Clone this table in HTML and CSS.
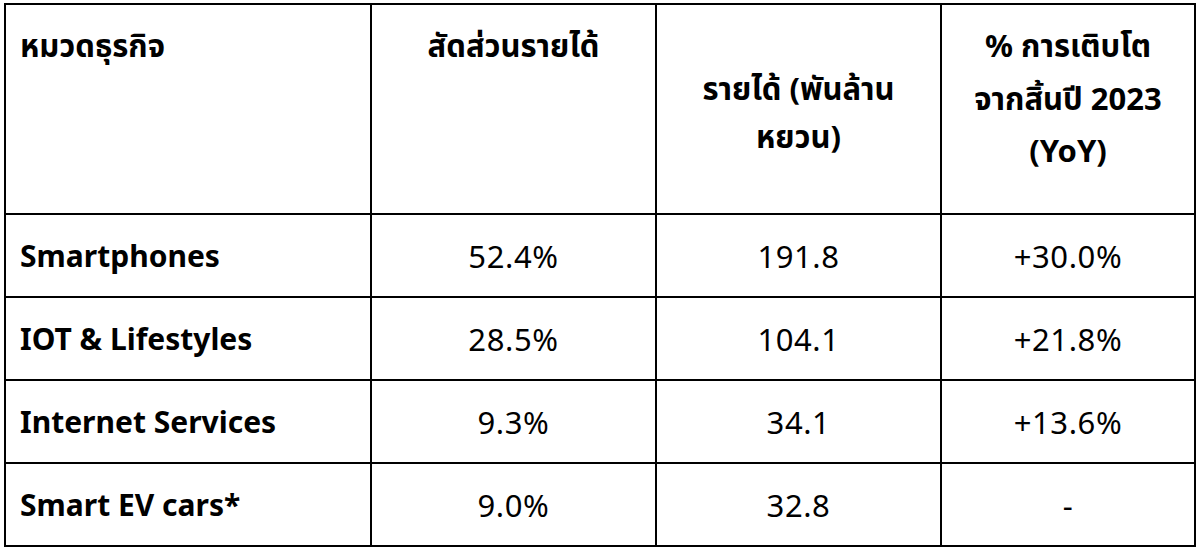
FILE: index.html
```html
<!DOCTYPE html>
<html lang="th">
<head>
<meta charset="utf-8">
<link rel="stylesheet" href="styles.css">
</head>
<body>
<table class="data">
  <colgroup>
    <col class="c1"><col class="c2"><col class="c3"><col class="c4">
  </colgroup>
  <thead>
    <tr class="head-row">
      <th class="h-left">หมวดธุรกิจ</th>
      <th class="h-top">สัดส่วนรายได้</th>
      <th class="h-mid">รายได้ (พันล้าน<br>หยวน)</th>
      <th class="h-top">% การเติบโต<br>จากสิ้นปี 2023<br>(YoY)</th>
    </tr>
  </thead>
  <tbody>
    <tr><td class="name">Smartphones</td><td>52.4%</td><td>191.8</td><td>+30.0%</td></tr>
    <tr><td class="name">IOT &amp; Lifestyles</td><td>28.5%</td><td>104.1</td><td>+21.8%</td></tr>
    <tr><td class="name">Internet Services</td><td>9.3%</td><td>34.1</td><td>+13.6%</td></tr>
    <tr><td class="name">Smart EV cars*</td><td>9.0%</td><td>32.8</td><td>-</td></tr>
  </tbody>
</table>
</body>
</html>
```

FILE: styles.css
```css
html, body {
  margin: 0;
  padding: 0;
  background: #ffffff;
}
body {
  padding: 3px 0 0 4px;
  font-family: "Noto Sans", "Noto Sans Thai", "DejaVu Sans", sans-serif;
  color: #000000;
}
.data {
  border-collapse: collapse;
  table-layout: fixed;
  width: 1190px;
}
.c1 { width: 366px; }
.c2 { width: 285px; }
.c3 { width: 285px; }
.c4 { width: 254px; }
.data th, .data td {
  box-sizing: border-box;
  border: 2px solid #000000;
  padding: 0 14px;
}
.data th {
  height: 210px;
  font-size: 31px;
  font-weight: 700;
  line-height: 52.5px;
  vertical-align: top;
  text-align: center;
  padding-top: 14px;
}
.data th.h-left {
  text-align: left;
}
.data th.h-mid {
  padding-top: 59px;
  line-height: 48px;
}
.data td {
  height: 83px;
  font-size: 31px;
  letter-spacing: 0.6px;
  text-align: center;
  vertical-align: middle;
}
.data td.name {
  text-align: left;
  font-size: 30px;
  letter-spacing: 0;
  font-weight: 700;
}
```
